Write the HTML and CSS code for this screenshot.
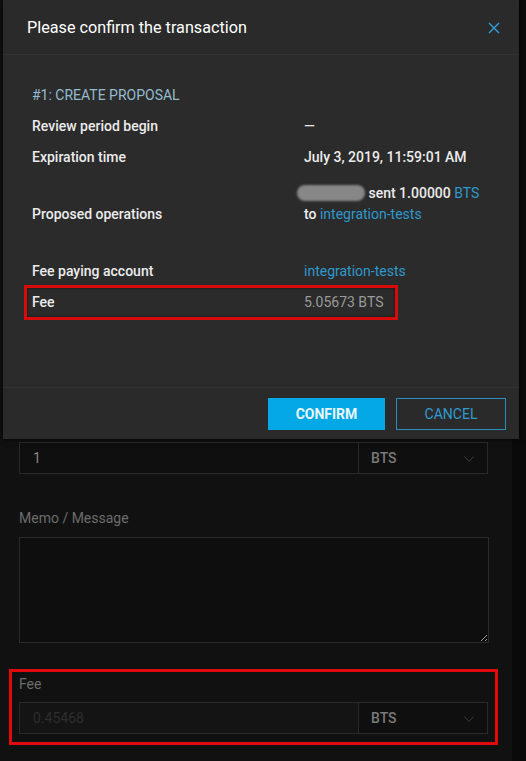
FILE: index.html
```html
<!DOCTYPE html>
<html lang="en">
<head>
<meta charset="utf-8">
<title>Please confirm the transaction</title>
<link rel="stylesheet" href="styles.css">
</head>
<body>
<div class="page">
  <form class="form">
    <label class="field-label">Amount</label>
    <div class="combo">
      <input class="combo-input" type="text" value="1">
      <div class="combo-select">
        <span>BTS</span>
        <svg class="chev" width="10" height="6" viewBox="0 0 10 6"><polyline points="0.5,0.5 5,5.5 9.5,0.5" fill="none" stroke="#3c3c3c" stroke-width="1"/></svg>
      </div>
    </div>

    <label class="field-label memo-label">Memo / Message</label>
    <textarea class="memo"></textarea>

    <div class="fee-group">
      <label class="field-label">Fee</label>
      <div class="combo">
        <input class="combo-input" type="text" placeholder="0.45468" disabled>
        <div class="combo-select">
          <span>BTS</span>
          <svg class="chev" width="10" height="6" viewBox="0 0 10 6"><polyline points="0.5,0.5 5,5.5 9.5,0.5" fill="none" stroke="#3c3c3c" stroke-width="1"/></svg>
        </div>
      </div>
    </div>
  </form>
  <div class="scroll-strip"></div>
</div>

<div class="modal">
  <div class="modal-header">
    <h1 class="modal-title">Please confirm the transaction</h1>
    <svg class="close" width="12" height="12" viewBox="0 0 12 12"><path d="M1 1 L11 11 M11 1 L1 11" stroke="#2f9bd1" stroke-width="1.5" fill="none"/></svg>
  </div>
  <div class="modal-body">
    <div class="op-title">#1: CREATE PROPOSAL</div>
    <div class="row">
      <div class="label">Review period begin</div>
      <div class="value">—</div>
    </div>
    <div class="row">
      <div class="label">Expiration time</div>
      <div class="value">July 3, 2019, 11:59:01 AM</div>
    </div>
    <div class="row row-ops">
      <div class="label">Proposed operations</div>
      <div class="value value-ops">
        <div><span class="blur"></span> sent 1.00000 <a class="link">BTS</a></div>
        <div>to <a class="link">integration-tests</a></div>
      </div>
    </div>
    <div class="row">
      <div class="label">Fee paying account</div>
      <div class="value"><a class="link">integration-tests</a></div>
    </div>
    <div class="row row-fee">
      <div class="label">Fee</div>
      <div class="value fee-value">5.05673 BTS</div>
    </div>
  </div>
  <div class="modal-footer">
    <button class="btn btn-primary" type="button">CONFIRM</button>
    <button class="btn btn-outline" type="button">CANCEL</button>
  </div>
</div>
</body>
</html>
```

FILE: styles.css
```css
*, *::before, *::after { box-sizing: border-box; }
html, body { margin: 0; padding: 0; }
body {
  background: #0b0b0b;
  font-family: Roboto, "Liberation Sans", Arial, sans-serif;
  width: 526px;
  height: 761px;
  overflow: hidden;
  position: relative;
}
.page {
  display: flex;
  width: 526px;
  min-height: 761px;
}
.form {
  width: 512px;
  background: #111;
  padding: 415px 0 0 19px;
  display: flex;
  flex-direction: column;
  align-items: flex-start;
}
.scroll-strip { flex: 1; background: #0a0a0a; }

.field-label {
  display: block;
  font-size: 14px;
  line-height: 19px;
  color: #6c6c6c;
  margin-bottom: 8px;
}
.combo {
  display: flex;
  width: 469px;
  height: 32px;
  border: 1px solid #2a2a2a;
  background: #0f0f0f;
}
.combo-input {
  width: 339px;
  border: 0;
  border-right: 1px solid #2a2a2a;
  background: transparent;
  color: #8a8a8a;
  font-family: Roboto, "Liberation Sans", Arial, sans-serif;
  font-size: 14px;
  padding: 0 0 0 13px;
  outline: none;
}
.combo-input::placeholder { color: #2e2e2e; }
.combo-input:disabled { background: #141414; }
.combo-select {
  flex: 1;
  display: flex;
  align-items: center;
  justify-content: space-between;
  padding: 0 13px 0 12px;
  color: #7a7a7a;
  font-size: 14px;
  font-weight: 500;
}
.chev { display: block; margin-top: 1px; }

.memo-label { margin-top: 35px; margin-bottom: 9px; }
.memo {
  display: block;
  width: 470px;
  height: 106px;
  background: #0e0e0e;
  border: 1px solid #2a2a2a;
  border-radius: 0;
  resize: vertical;
  color: #888;
  outline: none;
}
.fee-group {
  margin: 26px 0 0 -10px;
  border: 3px solid #e10a0a;
  padding: 3px 7px 8px 7px;
}
.fee-group .field-label { margin-bottom: 8px; }

/* Modal */
.modal {
  position: absolute;
  top: 0;
  left: 3px;
  width: 516px;
  height: 439px;
  background: #2a2a2a;
  box-shadow: 0 0 6px rgba(0,0,0,0.8);
  display: flex;
  flex-direction: column;
}
.modal-header {
  height: 55px;
  border-bottom: 1px solid #323232;
  display: flex;
  align-items: center;
  justify-content: space-between;
  padding: 0 19px 0 24px;
}
.modal-title {
  margin: 0;
  font-size: 16.2px;
  font-weight: 400;
  color: #fff;
}
.close { display: block; margin-top: 1px; }
.modal-body {
  flex: 1;
  padding: 25px 0 0 29px;
  background: #2b2b2b;
}
.op-title {
  height: 31px;
  line-height: 31px;
  font-size: 14px;
  color: #93bccf;
}
.row {
  display: grid;
  grid-template-columns: 272px 1fr;
  align-items: center;
  min-height: 31px;
  font-size: 14px;
  font-weight: 500;
  color: #ececec;
  line-height: 21px;
  position: relative;
}
.row-ops { min-height: 83px; }
.value-ops { align-self: start; padding-top: 10px; }
.blur {
  display: inline-block;
  width: 68px;
  height: 16px;
  margin-left: -7px;
  vertical-align: -3px;
  border-radius: 8px;
  background: #878787;
  filter: blur(1px);
}
.link { color: #2f98cc; font-weight: 400; cursor: pointer; }
.fee-value { color: #9a9a9a; font-weight: 400; }
.row-fee::after {
  content: "";
  position: absolute;
  left: -8px;
  top: -2px;
  width: 374px;
  height: 35px;
  border: 3px solid #d80b0b;
  box-shadow: inset 0 0 3px rgba(0,0,0,0.5);
}
.modal-footer {
  height: 52px;
  border-top: 1px solid #313131;
  display: flex;
  justify-content: flex-end;
  align-items: flex-start;
  gap: 11px;
  padding: 10px 13px 0 0;
}
.btn {
  height: 32px;
  font-family: Roboto, "Liberation Sans", Arial, sans-serif;
  font-size: 14px;
  cursor: pointer;
}
.btn-primary {
  width: 117px;
  background: #03a8e4;
  border: 0;
  color: #eaf6fb;
  font-weight: 700;
}
.btn-outline {
  width: 110px;
  background: transparent;
  border: 1px solid #2a8dbd;
  color: #2f9bd0;
  font-weight: 400;
}
```
